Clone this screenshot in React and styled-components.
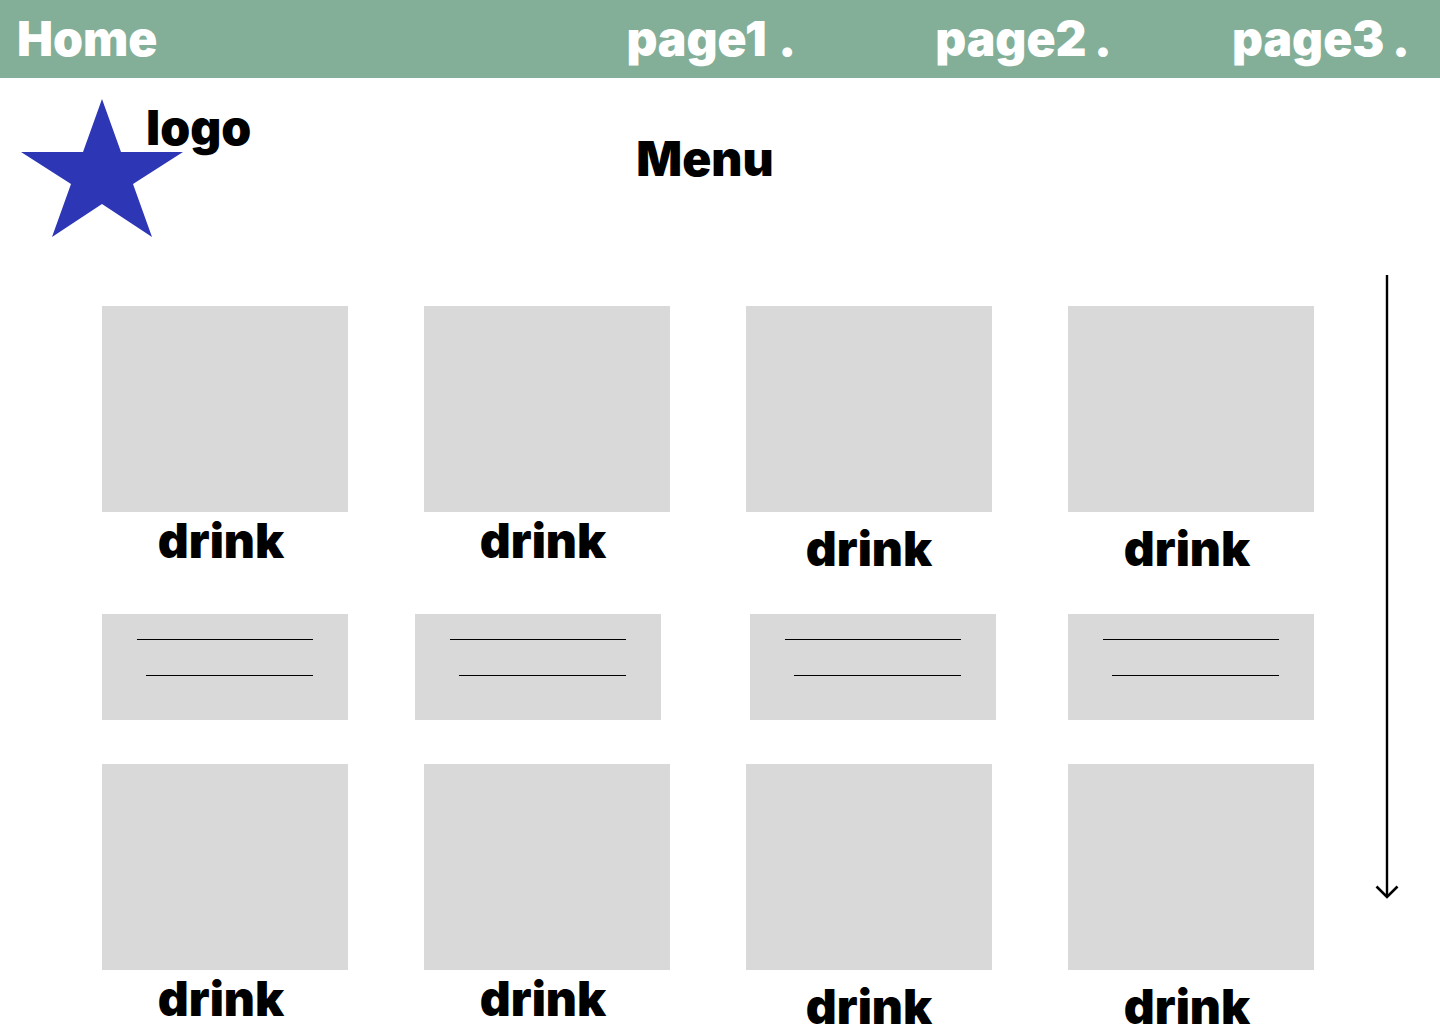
import React from 'react';
import styled, { createGlobalStyle } from 'styled-components';

const GlobalStyle = createGlobalStyle`
  html, body {
    margin: 0;
    height: 1024px;
    overflow: hidden;
    background: #fff;
    font-family: Inter, "Liberation Sans", sans-serif;
  }
`;

const Page = styled.div`
  width: 1440px;
  height: 1024px;
  overflow: hidden;
`;

const NavBar = styled.nav`
  display: flex;
  align-items: center;
  height: 78px;
  padding-left: 17px;
  background: #83af98;
  color: #fff;
  font-size: 48px;
  line-height: 78px;
  font-weight: 900;
  box-sizing: border-box;
`;

const NavLink = styled.a`
  margin-left: ${(p) => p.$gap}px;
  word-spacing: ${(p) => p.$space}px;
  white-space: nowrap;
`;

const Masthead = styled.header`
  display: flex;
  height: 228px;
`;

const Star = styled.svg`
  display: block;
  flex: none;
  width: 162px;
  height: 138px;
  margin: 21px 0 0 21px;
`;

const LogoText = styled.span`
  margin: 23px 0 0 -37px;
  position: relative;
  font-size: 48px;
  line-height: 54px;
  font-weight: 900;
  color: #000;
`;

const MenuTitle = styled.h1`
  margin: 54px 0 0 385px;
  font-size: 48px;
  line-height: 54px;
  font-weight: 900;
  color: #000;
`;

const Content = styled.main`
  display: flex;
  padding-left: 102px;
`;

const Grid = styled.div`
  display: grid;
  grid-template-columns: repeat(4, 246px);
  grid-auto-rows: max-content;
  column-gap: 76px;
`;

const Card = styled.div`
  height: 308px;
`;

const Photo = styled.div`
  width: 246px;
  height: 206px;
  background: #d9d9d9;
`;

const Label = styled.div`
  margin: ${(p) => p.$drop}px 0 0 ${(p) => p.$shift}px;
  text-align: center;
  font-size: 48px;
  line-height: 58px;
  font-weight: 900;
  color: #000;
`;

const Note = styled.div`
  display: flex;
  flex-direction: column;
  align-items: flex-end;
  gap: 35px;
  width: 246px;
  height: 106px;
  margin: 0 0 44px ${(p) => p.$shift}px;
  padding: 25px 35px 0 0;
  box-sizing: border-box;
  background: #d9d9d9;
`;

const NoteLine = styled.div`
  width: ${(p) => p.$width}px;
  height: 1px;
  background: #000;
`;

const ScrollRail = styled.svg`
  display: block;
  flex: none;
  width: 26px;
  height: 626px;
  margin: -31px 0 0 60px;
`;

const labelOffsets = [
  { drop: 0, shift: -8 },
  { drop: 0, shift: -8 },
  { drop: 8, shift: 0 },
  { drop: 8, shift: -8 },
];
const noteShifts = [0, -9, 4, 0];

function DrinkRow() {
  return labelOffsets.map((offset, i) => (
    <Card key={i}>
      <Photo />
      <Label $drop={offset.drop} $shift={offset.shift}>drink</Label>
    </Card>
  ));
}

function App() {
  return (
    <Page>
      <GlobalStyle />
      <NavBar>
        <span>Home</span>
        <NavLink $gap={469} $space={2}>page1 .</NavLink>
        <NavLink $gap={139} $space={-2}>page2 .</NavLink>
        <NavLink $gap={120} $space={-2}>page3 .</NavLink>
      </NavBar>
      <Masthead>
        <Star viewBox="0 0 162 138">
          <polygon
            fill="#2d36b5"
            points="81,0 100,53 162,53 112,85 131,138 81,105 31,138 50,85 0,53 62,53"
          />
        </Star>
        <LogoText>logo</LogoText>
        <MenuTitle>Menu</MenuTitle>
      </Masthead>
      <Content>
        <Grid>
          <DrinkRow />
          {noteShifts.map((shift, i) => (
            <Note key={i} $shift={shift}>
              <NoteLine $width={176} />
              <NoteLine $width={167} />
            </Note>
          ))}
          <DrinkRow />
        </Grid>
        <ScrollRail viewBox="0 0 26 626">
          <path d="M13 0V621" stroke="#000" strokeWidth="2.4" fill="none" />
          <path d="M2.5 611.5L13 622L23.5 611.5" stroke="#000" strokeWidth="2.6" fill="none" />
        </ScrollRail>
      </Content>
    </Page>
  );
}

export default App;
